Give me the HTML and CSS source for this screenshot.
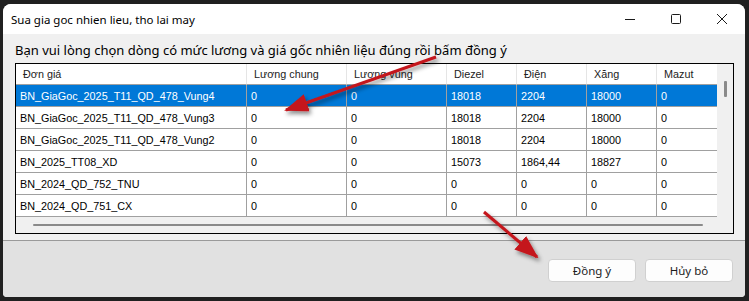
FILE: index.html
```html
<!DOCTYPE html>
<html>

<head>
    <link rel="stylesheet" href="styles.css">
</head>

<body>

    <div class="window">
        <div class="titlebar">
            <span class="title">Sua gia goc nhien lieu, tho lai may</span>
            <div class="controls">
                <span class="ctl">
                    <svg width="12" height="12" viewBox="0 0 12 12"><path d="M1 6.5h10" stroke="#1a1a1a" stroke-width="1" fill="none"/></svg>
                </span>
                <span class="ctl">
                    <svg width="12" height="12" viewBox="0 0 12 12"><rect x="1.5" y="1.5" width="9" height="9" rx="1" stroke="#1a1a1a" stroke-width="1" fill="none"/></svg>
                </span>
                <span class="ctl">
                    <svg width="12" height="12" viewBox="0 0 12 12"><path d="M1 1l10 10M11 1L1 11" stroke="#1a1a1a" stroke-width="1" fill="none"/></svg>
                </span>
            </div>
        </div>

        <div class="content">
            <p class="prompt">Bạn vui lòng chọn dòng có mức lương và giá gốc nhiên liệu đúng rồi bấm đồng ý</p>

            <div class="grid-frame">
                <div class="grid-main">
                    <div class="row head">
                        <span>Đơn giá</span>
                        <span>Lương chung</span>
                        <span>Lương vùng</span>
                        <span>Diezel</span>
                        <span>Điện</span>
                        <span>Xăng</span>
                        <span>Mazut</span>
                    </div>
                    <div class="row selected">
                        <span>BN_GiaGoc_2025_T11_QD_478_Vung4</span>
                        <span>0</span><span>0</span><span>18018</span><span>2204</span><span>18000</span><span>0</span>
                    </div>
                    <div class="row">
                        <span>BN_GiaGoc_2025_T11_QD_478_Vung3</span>
                        <span>0</span><span>0</span><span>18018</span><span>2204</span><span>18000</span><span>0</span>
                    </div>
                    <div class="row">
                        <span>BN_GiaGoc_2025_T11_QD_478_Vung2</span>
                        <span>0</span><span>0</span><span>18018</span><span>2204</span><span>18000</span><span>0</span>
                    </div>
                    <div class="row">
                        <span>BN_2025_TT08_XD</span>
                        <span>0</span><span>0</span><span>15073</span><span>1864,44</span><span>18827</span><span>0</span>
                    </div>
                    <div class="row">
                        <span>BN_2024_QD_752_TNU</span>
                        <span>0</span><span>0</span><span>0</span><span>0</span><span>0</span><span>0</span>
                    </div>
                    <div class="row">
                        <span>BN_2024_QD_751_CX</span>
                        <span>0</span><span>0</span><span>0</span><span>0</span><span>0</span><span>0</span>
                    </div>
                    <div class="hscroll"><span class="hthumb"></span></div>
                </div>
                <div class="vscroll"><span class="vthumb"></span></div>
            </div>
        </div>

        <div class="footer">
            <button class="button">Đồng ý</button>
            <button class="button">Hủy bỏ</button>
        </div>
    </div>

    <!-- annotation arrows drawn over the screenshot -->
    <svg class="arrows" width="749" height="301" viewBox="0 0 749 301">
        <defs>
            <filter id="shadow" x="-20%" y="-20%" width="140%" height="140%">
                <feDropShadow dx="2" dy="3" stdDeviation="2" flood-color="#000" flood-opacity="0.45"/>
            </filter>
            <marker id="head" markerUnits="userSpaceOnUse" markerWidth="24" markerHeight="18" refX="22" refY="9" orient="auto">
                <path d="M0 0L24 9L0 18Z" fill="#c4161c"/>
            </marker>
        </defs>
        <g filter="url(#shadow)">
            <line x1="436" y1="57" x2="286" y2="110" stroke="#c4161c" stroke-width="3" marker-end="url(#head)"/>
            <line x1="484" y1="212" x2="537" y2="257" stroke="#c4161c" stroke-width="3" marker-end="url(#head)"/>
        </g>
    </svg>

</body>

</html>
```

FILE: styles.css
```css
body {
    margin: 0;
    width: 749px;
    height: 301px;
    background: #202020;
    position: relative;
    overflow: hidden;
}

.window {
    margin: 4px 0 0 3px;
    width: 742px;
    height: 293px;
    background: #f0f0f0;
    border-radius: 8px 8px 4px 4px;
    overflow: hidden;
    display: flex;
    flex-direction: column;
}

.titlebar {
    height: 30px;
    background: #fff;
    display: flex;
    align-items: center;
    justify-content: space-between;
}

.title {
    padding-left: 8px;
    font-family: "Noto Sans", sans-serif;
    font-size: 11.5px;
    color: #000;
}

.controls {
    display: flex;
    height: 100%;
}

.ctl {
    width: 46px;
    display: flex;
    align-items: center;
    justify-content: center;
}

.content {
    height: 206px;
    padding: 8px 0 0 12px;
    box-sizing: border-box;
}

.prompt {
    margin: 0 0 5px 0;
    height: 16px;
    line-height: 16px;
    font-family: "Noto Sans", sans-serif;
    font-size: 13px;
    color: #000;
    white-space: nowrap;
}

.grid-frame {
    width: 719px;
    height: 171px;
    border: 1px solid #000;
    box-sizing: border-box;
    display: flex;
    background: #f0f0f0;
}

.grid-main {
    width: 701px;
    display: flex;
    flex-direction: column;
    font-family: "Liberation Sans", Arial, sans-serif;
    font-size: 10.8px;
}

.row {
    display: grid;
    grid-template-columns: 231px 100px 100px 70px 70px 70px 60px;
    height: 22px;
    background: #fff;
    color: #000;
}

.row span {
    box-sizing: border-box;
    border-right: 1px solid #a0a0a0;
    border-bottom: 1px solid #a0a0a0;
    padding-left: 4px;
    display: flex;
    align-items: center;
    white-space: nowrap;
    overflow: hidden;
}

.row span:last-child {
    border-right: none;
}

.row.head {
    height: 21px;
    color: #222;
}

.row.head span {
    border-right-color: #e5e5e5;
    padding-left: 7px;
}

.row.selected {
    background: #0078d7;
    color: #fff;
}

.hscroll {
    flex: 1;
    display: flex;
    align-items: center;
    padding: 0 14px 0 17px;
}

.hthumb {
    flex: 1;
    height: 2px;
    background: #8a8a8a;
    border-radius: 1px;
}

.vscroll {
    flex: 1;
    display: flex;
    justify-content: center;
    padding-top: 17px;
}

.vthumb {
    width: 3px;
    height: 16px;
    background: #8a8a8a;
    border-radius: 1px;
}

.footer {
    flex: 1;
    border-top: 1px solid #9a9a9a;
    background: #e1e1e1;
    display: flex;
    justify-content: flex-end;
    align-items: flex-start;
    gap: 9px;
    padding: 18px 12px 0 0;
}

.button {
    width: 88px;
    height: 23px;
    background: #fdfdfd;
    border: 1px solid #d0d0d0;
    border-radius: 4px;
    font-family: "Noto Sans", sans-serif;
    font-size: 11.5px;
    color: #1b1b1b;
    padding: 0;
}

.arrows {
    position: absolute;
    left: 0;
    top: 0;
    pointer-events: none;
}
```
